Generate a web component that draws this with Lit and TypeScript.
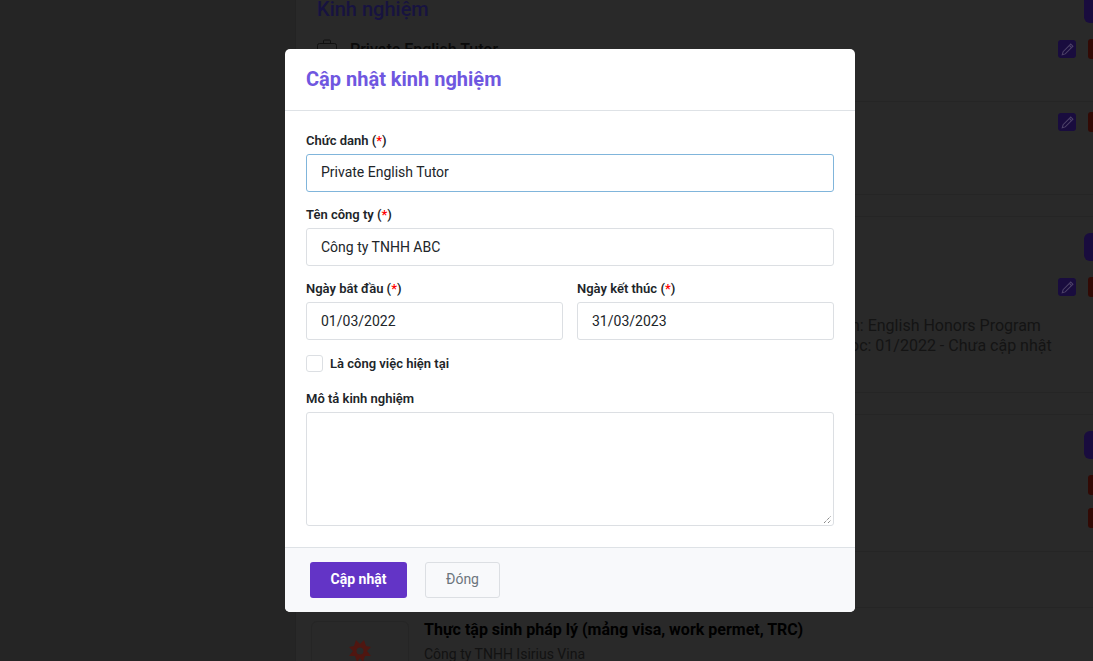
import { LitElement, html, css } from "lit";
import { customElement } from "lit/decorators.js";

const pencil = html`<svg viewBox="0 0 16 16" width="15" height="15" fill="none" stroke="currentColor" stroke-width="1.1"><path d="M11.5 2.2 13.8 4.5 5.6 12.7 2.4 13.6 3.3 10.4Z"/><path d="M10 3.7 12.3 6"/></svg>`;

@customElement("app-root")
export class AppRoot extends LitElement {
  static styles = css`
    :host { display: block; font-family: Roboto, "Noto Sans", sans-serif; }
    * { box-sizing: border-box; }
    .page { position: relative; width: 1093px; height: 661px; overflow: hidden; background: #252525; padding-left: 295px; }
    .panel { width: 830px; height: 1000px; margin-top: -6px; background: #292929; border-left: 1px solid #232323; padding-left: 21px; color: #0a0a0a; }
    .h { font-size: 20px; line-height: 30px; font-weight: 500; color: #171340; height: 30px; }
    .job { font-size: 16px; line-height: 24px; font-weight: 500; display: flex; height: 24px; margin-top: 14px; }
    .bag { width: 20px; height: 20px; margin-right: 13px; margin-top: 1px; flex: none; }
    .rule { height: 1px; background: #252525; margin-left: -21px; }
    .sp39 { height: 39px; } .sp92 { height: 92px; } .sp21 { height: 21px; }
    .sp99 { height: 99px; } .sp36 { height: 36px; } .sp136 { height: 136px; } .sp55 { height: 55px; }
    .body16 { font-size: 16px; line-height: 20px; color: #141414; white-space: nowrap; }
    .l1 { padding-left: 534px; }
    .l2 { padding-left: 533px; }
    .thuc { display: flex; gap: 15px; padding-top: 11px; margin-left: -6px; }
    .logo { width: 98px; height: 100px; margin-top: 2px; border: 1px solid #252525; border-radius: 6px; flex: none; display: flex; justify-content: center; padding-top: 17px; }
    .thuc h3 { margin: 0; font-size: 16px; line-height: 22px; font-weight: 700; color: #000; white-space: nowrap; }
    .thuc p { margin: 3px 0 0; font-size: 14px; line-height: 20px; color: #121212; }
    .sq { position: absolute; width: 18px; height: 18px; border-radius: 3px; background: #190c3e; color: #4d4268; display: flex; align-items: center; justify-content: center; }
    .red { background: #320a05; width: 20px; height: 20px; }
    .plus { width: 30px; height: 28px; border-radius: 6px; font-size: 14px; color: #4d4268; }
    .modal { position: absolute; left: 285px; top: 49px; width: 570px; height: 563px; background: #fff; border-radius: 5px; display: flex; flex-direction: column; overflow: hidden; }
    .head { height: 62px; border-bottom: 1px solid #dee2e6; padding: 18px 21px 0; font-size: 20px; line-height: 24px; font-weight: 700; color: #6f57e0; }
    .form { flex: 1; padding: 22px 21px 0; display: flex; flex-direction: column; }
    label { display: block; font-size: 13px; line-height: 16px; font-weight: 600; color: #212529; margin-bottom: 5px; }
    .req { color: #f00; }
    .inp { height: 38px; border: 1px solid #dcdfe3; border-radius: 3px; padding: 0 14px; font-size: 14px; line-height: 36px; color: #212529; background: #fff; }
    .focus { border-color: #80b5db; line-height: 34px; }
    .f { margin-bottom: 15px; }
    .two { display: grid; grid-template-columns: 1fr 1fr; gap: 14px; }
    .check { display: flex; align-items: center; gap: 7px; height: 18px; font-size: 13px; font-weight: 600; color: #212529; margin-top: -1px; margin-bottom: 19px; }
    .box { width: 17px; height: 17px; border: 1px solid #dcdfe3; border-radius: 3px; }
    .area { height: 114px; border: 1px solid #dcdfe3; border-radius: 3px; position: relative; }
    .grip { position: absolute; right: 1px; bottom: 1px; }
    .foot { height: 65px; background: #f8f9fb; border-top: 1px solid #dee2e6; padding: 14px 25px 0; display: flex; gap: 18px; align-items: flex-start; }
    .btn { height: 36px; border-radius: 3px; font-size: 14px; display: flex; align-items: center; justify-content: center; padding-bottom: 2px; }
    .save { width: 97px; background: #6334c6; color: #fff; font-weight: 700; }
    .close { width: 75px; border: 1px solid #dcdfe3; color: #6c757d; }
  `;

  render() {
    return html`
      <div class="page">
        <div class="panel">
          <div class="h">Kinh nghiệm</div>
          <div class="job">
            <svg class="bag" viewBox="0 0 20 20" fill="none" stroke="#111"><rect x=".5" y="4.5" width="19" height="14" rx="2"/><path d="M6.5 4.5V2a1 1 0 0 1 1-1h5a1 1 0 0 1 1 1v2.5"/></svg>
            <span>Private English Tutor</span>
          </div>
          <div class="sp39"></div>
          <div class="rule"></div>
          <div class="sp92"></div>
          <div class="rule"></div>
          <div class="sp21"></div>
          <div class="rule"></div>
          <div class="sp99"></div>
          <div class="body16 l1">n: English Honors Program</div>
          <div class="body16 l2">oc: 01/2022 - Chưa cập nhật</div>
          <div class="sp36"></div>
          <div class="rule"></div>
          <div class="sp21"></div>
          <div class="rule"></div>
          <div class="sp136"></div>
          <div class="rule"></div>
          <div class="sp55"></div>
          <div class="rule"></div>
          <div class="thuc">
            <div class="logo">
              <svg width="24" height="24" viewBox="0 0 24 24" fill="#4f1610"><path d="M8 1l4 4 4-4 2 6 5 1-4 4 4 5-6 0-2 6-3-4-3 4-2-6-6 0 4-5-4-4 5-1z"/><circle cx="12" cy="12" r="3.5" fill="#292929"/></svg>
            </div>
            <div>
              <h3>Thực tập sinh pháp lý (mảng visa, work permet, TRC)</h3>
              <p>Công ty TNHH Isirius Vina</p>
            </div>
          </div>
        </div>
        <div class="sq plus" style="left:1084px;top:-5px">+</div>
        <div class="sq" style="left:1058px;top:40px">${pencil}</div>
        <div class="sq red" style="left:1088px;top:39px"></div>
        <div class="sq" style="left:1058px;top:113px">${pencil}</div>
        <div class="sq red" style="left:1088px;top:112px"></div>
        <div class="sq plus" style="left:1084px;top:233px">+</div>
        <div class="sq" style="left:1058px;top:278px">${pencil}</div>
        <div class="sq red" style="left:1088px;top:277px"></div>
        <div class="sq plus" style="left:1084px;top:431px">+</div>
        <div class="sq red" style="left:1088px;top:475px"></div>
        <div class="sq red" style="left:1088px;top:508px"></div>
        <div class="modal">
          <div class="head">Cập nhật kinh nghiệm</div>
          <div class="form">
            <div class="f">
              <label>Chức danh (<span class="req">*</span>)</label>
              <div class="inp focus">Private English Tutor</div>
            </div>
            <div class="f">
              <label>Tên công ty (<span class="req">*</span>)</label>
              <div class="inp">Công ty TNHH ABC</div>
            </div>
            <div class="two f">
              <div>
                <label>Ngày bắt đầu (<span class="req">*</span>)</label>
                <div class="inp">01/03/2022</div>
              </div>
              <div>
                <label>Ngày kết thúc (<span class="req">*</span>)</label>
                <div class="inp">31/03/2023</div>
              </div>
            </div>
            <div class="check"><span class="box"></span>Là công việc hiện tại</div>
            <div>
              <label>Mô tả kinh nghiệm</label>
              <div class="area">
                <svg class="grip" width="9" height="9" viewBox="0 0 9 9" stroke="#555" stroke-dasharray="1 1" fill="none"><path d="M1 8 8 1M5 8 8 5"/></svg>
              </div>
            </div>
          </div>
          <div class="foot">
            <div class="btn save">Cập nhật</div>
            <div class="btn close">Đóng</div>
          </div>
        </div>
      </div>
    `;
  }
}
